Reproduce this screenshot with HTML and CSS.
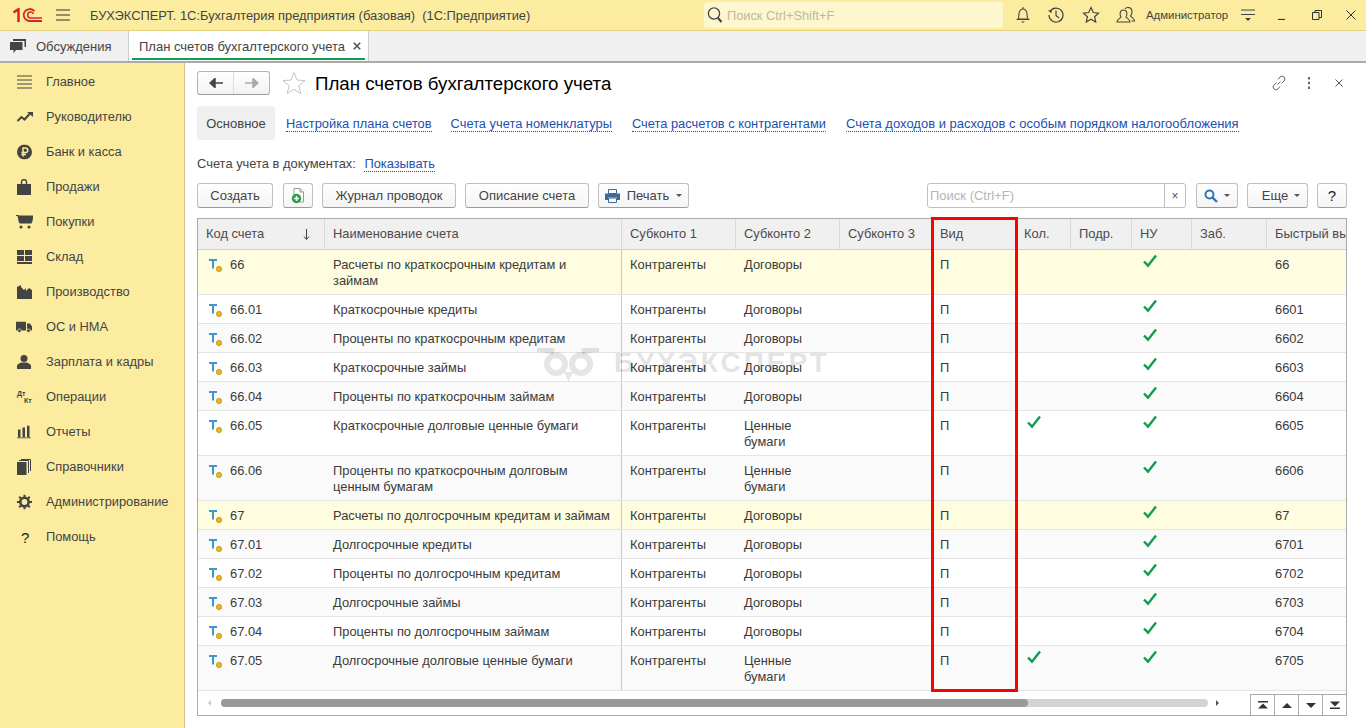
FILE: index.html
```html
<!DOCTYPE html>
<html lang="ru">
<head>
<meta charset="utf-8">
<title>План счетов бухгалтерского учета</title>
<link rel="stylesheet" href="styles.css">
</head>
<body>
<svg class="defs" width="0" height="0" aria-hidden="true">
  <symbol id="acc" viewBox="0 0 16 16">
    <path d="M1 1h8M5 1V9.500" fill="none" stroke="#3f96cc" stroke-width="2"/>
    <circle cx="11" cy="10" r="2.700" fill="#e8b818" stroke="#b08a10" stroke-width=".6"/>
  </symbol>
  <symbol id="chk" viewBox="0 0 14 14">
    <path d="M1 7.500l4 4.200L13 1.500" fill="none" stroke="#0f9d50" stroke-width="2.400"/>
  </symbol>
</svg>
<div class="app">
  <header class="topbar">
    <svg class="logo" width="29" height="14" viewBox="0 0 29 14">
      <path d="M.5 4.500L5.500 1.200V14" fill="none" stroke="#d8252a" stroke-width="2.500"/>
      <path d="M21.500 3.300A6 6 0 1 0 17 13H29" fill="none" stroke="#d8252a" stroke-width="1.800"/>
      <path d="M20.500 6A3 3 0 1 0 17.500 10H29" fill="none" stroke="#d8252a" stroke-width="1.600"/>
    </svg>
    <svg class="burger" width="14" height="12" viewBox="0 0 14 12"><path d="M0 1h14M0 6h14M0 11h14" stroke="#333" stroke-width="1.200"/></svg>
    <div class="apptitle">БУХЭКСПЕРТ. 1С:Бухгалтерия предприятия (базовая)&nbsp; (1С:Предприятие)</div>
    <div class="globalsearch">
      <svg width="16" height="18" viewBox="0 0 16 18"><circle cx="7" cy="7.500" r="5.600" fill="none" stroke="#444" stroke-width="1.300"/><path d="M11 12l3.500 4" stroke="#444" stroke-width="2"/></svg>
      <span>Поиск Ctrl+Shift+F</span>
    </div>
    <div class="topicons">
      <svg width="16" height="18" viewBox="0 0 16 18"><path d="M3 13c1-1.500 1-3 1-5.500C4 5 6 3 8 3s4 2 4 4.500c0 2.500 0 4 1 5.500z M1.500 13.500h13" fill="none" stroke="#444" stroke-width="1.100"/><path d="M6 15.500h4l-2 1.500z" fill="#444"/><path d="M8 1v2" stroke="#444"/></svg>
      <svg width="18" height="18" viewBox="0 0 18 18"><path d="M3 5.500A7 7 0 1 1 2 9" fill="none" stroke="#444" stroke-width="1.200"/><path d="M1 4.500l3.500-.5v3.500z" fill="#444"/><path d="M9 4.500V9.500l3 2.500" fill="none" stroke="#444" stroke-width="1.200"/></svg>
      <svg width="18" height="18" viewBox="0 0 18 18"><path d="M9 1.500l2.300 5 5.200.6-3.900 3.600 1.100 5.300L9 13.300 4.300 16l1.100-5.300L1.500 7.100l5.200-.6z" fill="none" stroke="#444" stroke-width="1.200"/></svg>
      <svg width="20" height="18" viewBox="0 0 20 18"><path d="M1 16c0-3 3-3.500 4-5-1.500-2-1.500-7 2.500-7S11.500 9 10 11c1 1.500 4 2 4 5z" fill="none" stroke="#444" stroke-width="1.100"/><path d="M9 3c1-2 7-2.500 7 2.500 0 2-.5 3.500-1.500 4.500 1 1.500 4 2 4 5h-3" fill="none" stroke="#444" stroke-width="1.100"/></svg>
    </div>
    <div class="username">Администратор</div>
    <svg class="wbtn-menu" width="14" height="12" viewBox="0 0 14 12"><path d="M0 1h14M0 5.500h14" stroke="#444" stroke-width="1.100"/><path d="M4 9h6l-3 3z" fill="#444"/></svg>
    <div class="wincontrols">
      <svg width="10" height="10" viewBox="0 0 10 10"><path d="M1 9.500h7" stroke="#333" stroke-width="1.200"/></svg>
      <svg width="10" height="10" viewBox="0 0 10 10"><path d="M.5 2.500h6.500v7H.5z M3 2.500V.5h6.500v7H7" fill="none" stroke="#333"/></svg>
      <svg width="10" height="10" viewBox="0 0 10 10"><path d="M.5.500l9 9M9.500.500l-9 9" stroke="#333"/></svg>
    </div>
  </header>

  <nav class="tabbar">
    <div class="tab tab-plain">
      <svg width="17" height="15" viewBox="0 0 17 15"><path d="M4 0h13v8h-1.500V2H4z" fill="#444"/><path d="M1 3h12.500v8H7l-2.500 3v-3H1z" fill="#444"/></svg>
      <span>Обсуждения</span>
    </div>
    <div class="tab tab-active">
      <span>План счетов бухгалтерского учета</span>
      <svg class="tabclose" width="8" height="8" viewBox="0 0 8 8"><path d="M.8.800l6.400 6.400M7.200.800L.8 7.200" stroke="#555" stroke-width="1.600"/></svg>
    </div>
  </nav>

  <div class="workspace">
    <aside class="sidebar">
      <div class="navitem"><svg class="navicon" width="15" height="15" viewBox="0 0 15 15"><path d="M0 1.500h15M0 5.500h15M0 9.500h15M0 13.500h15" stroke="#444"/></svg>Главное</div>
      <div class="navitem"><svg class="navicon" width="16" height="12" viewBox="0 0 16 12"><path d="M.5 10l4-4 3 2.500 5-5.500" fill="none" stroke="#444" stroke-width="2"/><path d="M10 1h6v5z" fill="#444"/></svg>Руководителю</div>
      <div class="navitem"><svg class="navicon" width="15" height="15" viewBox="0 0 15 15"><circle cx="7.500" cy="7.500" r="7.500" fill="#444"/><path d="M6 12V3.500h2.500a2.300 2.300 0 0 1 0 4.600H4.500M4.500 10H9" fill="none" stroke="#fbec9f" stroke-width="1.500"/></svg>Банк и касса</div>
      <div class="navitem"><svg class="navicon" width="14" height="16" viewBox="0 0 14 16"><path d="M0 5h14v11H0z" fill="#444"/><path d="M4.500 7V3a2.500 2.500 0 0 1 5 0v4" fill="none" stroke="#444" stroke-width="1.400"/></svg>Продажи</div>
      <div class="navitem"><svg class="navicon navicon-wide" width="17" height="14" viewBox="0 0 17 14"><path d="M0 .5h3M2 1h15l-1.500 7H3.500z" fill="#444" stroke="#444"/><circle cx="5" cy="12" r="1.500" fill="#444"/><circle cx="13" cy="12" r="1.500" fill="#444"/></svg>Покупки</div>
      <div class="navitem"><svg class="navicon" width="15" height="14" viewBox="0 0 15 14"><path d="M0 0h7v5H0zM8 0h7v5H8zM0 6h7v5H0zM8 6h7v5H8zM0 12h15v2H0z" fill="#444"/></svg>Склад</div>
      <div class="navitem"><svg class="navicon" width="15" height="14" viewBox="0 0 15 14"><path d="M0 14V2l4-2v2l3 3 2-2v3l3-3 3 2v9z" fill="#444"/></svg>Производство</div>
      <div class="navitem"><svg class="navicon navicon-wide" width="16" height="11" viewBox="0 0 16 11"><path d="M0 0h10v9H0zM11 2h3l2 3v4h-5z" fill="#444"/><circle cx="3.500" cy="9.200" r="1.800" fill="#444" stroke="#fbec9f" stroke-width=".7"/><circle cx="12.500" cy="9.200" r="1.800" fill="#444" stroke="#fbec9f" stroke-width=".7"/></svg>ОС и НМА</div>
      <div class="navitem"><svg class="navicon" width="14" height="14" viewBox="0 0 14 14"><circle cx="7" cy="3.500" r="3.500" fill="#444"/><path d="M0 14v-3c0-2 3-3 4.500-3.500h5C11 8 14 9 14 11v3z" fill="#444"/></svg>Зарплата и кадры</div>
      <div class="navitem"><span class="navicon dtkt"><span>Дт</span><span class="kt">Кт</span></span>Операции</div>
      <div class="navitem"><svg class="navicon" width="14" height="13" viewBox="0 0 14 13"><path d="M1 4h2.500v8H1zM5.500 2H8v10H5.500zM10 0h2.500v12H10z" fill="#444"/><path d="M0 12.500h14" stroke="#444"/></svg>Отчеты</div>
      <div class="navitem"><svg class="navicon" width="14" height="16" viewBox="0 0 14 16"><path d="M0 3h9.500v13H0z" fill="#444"/><path d="M2 1.500h9.500V14M4 .5h9.500V12" fill="none" stroke="#444"/></svg>Справочники</div>
      <div class="navitem"><svg class="navicon" width="15" height="15" viewBox="0 0 15 15"><circle cx="7.500" cy="7.500" r="4.200" fill="none" stroke="#444" stroke-width="2.600"/><path d="M7.500 0v15M0 7.500h15M2.200 2.200l10.600 10.600M12.800 2.200L2.200 12.800" stroke="#444" stroke-width="2" stroke-dasharray="2.600 9.800"/></svg>Администрирование</div>
      <div class="navitem"><span class="navicon helpmark">?</span>Помощь</div>
    </aside>

    <main class="content">
      <div class="formhead">
        <div class="navgroup">
          <span class="navbtn"><svg width="14" height="10" viewBox="0 0 14 10"><path d="M14 5H5M6 .5L1 5l5 4.500z" fill="#444" stroke="#444" stroke-width="1.500"/></svg></span>
          <span class="navbtn"><svg width="14" height="10" viewBox="0 0 14 10"><path d="M0 5h9M8 .5L13 5 8 9.500z" fill="#aaa" stroke="#aaa" stroke-width="1.500"/></svg></span>
        </div>
        <svg class="favstar" width="24" height="24" viewBox="0 0 24 24"><path d="M12 1.500l3 7.500 8 .6-6.200 5.100 2 7.800L12 18.300l-6.800 4.200 2-7.800L1 9.600 9 9z" fill="none" stroke="#c4c4c4"/></svg>
        <h1 class="formtitle">План счетов бухгалтерского учета</h1>
        <div class="formactions">
          <svg width="16" height="16" viewBox="0 0 16 16"><path d="M6.500 9.500l3-3M7 4.500l2-2.500a2.800 2.800 0 0 1 4 4l-2.500 2.500M9 11.500l-2 2.500a2.800 2.800 0 0 1-4-4l2.500-2.500" fill="none" stroke="#666"/></svg>
          <svg class="dots" width="4" height="12" viewBox="0 0 4 12"><path d="M2 0v2.500M2 4.800v2.500M2 9.500V12" stroke="#666" stroke-width="2"/></svg>
          <svg width="8" height="8" viewBox="0 0 8 8"><path d="M.5.500l7 7M7.500.500l-7 7" stroke="#555"/></svg>
        </div>
      </div>

      <div class="sections">
        <span class="section-current">Основное</span>
        <a class="lnk sec1" href="#">Настройка плана счетов</a>
        <a class="lnk" href="#">Счета учета номенклатуры</a>
        <a class="lnk" href="#">Счета расчетов с контрагентами</a>
        <a class="lnk lnk-long" href="#">Счета доходов и расходов с особым порядком налогообложения</a>
      </div>

      <div class="docline">Счета учета в документах: <a class="lnk docshow" href="#">Показывать</a></div>

      <div class="toolbar">
        <button class="btn b-create">Создать</button>
        <button class="btn b-icon"><svg width="14" height="16" viewBox="0 0 14 16"><path d="M3 .5h6l3.500 3.500v10H3z" fill="#fff" stroke="#999"/><path d="M9 .5V4h3.500" fill="#ddd" stroke="#999"/><circle cx="5.500" cy="10.500" r="4.700" fill="#25a048"/><path d="M5.500 8v5M3 10.500h5" stroke="#fff" stroke-width="1.500"/></svg></button>
        <button class="btn b-journal">Журнал проводок</button>
        <button class="btn b-descr">Описание счета</button>
        <button class="btn b-print"><svg width="15" height="14" viewBox="0 0 15 14"><path d="M3.500.5h8v4h-8z" fill="#fff" stroke="#3c6a94"/><path d="M0 4.500h15V11h-3V8.500H3V11H0z" fill="#3c6a94"/><path d="M3.500 9h8v4.500h-8z" fill="#fff" stroke="#3c6a94"/></svg><span>Печать</span><i class="caret"></i></button>
        <div class="tbsearch"><span class="tbsearch-ph">Поиск (Ctrl+F)</span><span class="tbsearch-x">×</span></div>
        <button class="btn b-find"><svg width="14" height="14" viewBox="0 0 14 14"><circle cx="5.500" cy="5.500" r="4" fill="none" stroke="#2a76b8" stroke-width="2"/><path d="M8.500 8.500l4.500 4.500" stroke="#2a76b8" stroke-width="2.400"/></svg><i class="caret"></i></button>
        <button class="btn b-more"><span>Еще</span><i class="caret"></i></button>
        <button class="btn b-help">?</button>
      </div>

      <div class="table">
        <div class="row head">
          <div class="c hc c1">Код счета<svg class="sortarrow" width="7" height="11" viewBox="0 0 7 11"><path d="M3.500 0v10M1 7.500l2.500 3 2.500-3" fill="none" stroke="#444"/></svg></div>
          <div class="c hc c2">Наименование счета</div>
          <div class="c hc">Субконто 1</div><div class="c hc">Субконто 2</div><div class="c hc">Субконто 3</div>
          <div class="c hc">Вид</div><div class="c hc">Кол.</div><div class="c hc">Подр.</div><div class="c hc">НУ</div><div class="c hc">Заб.</div><div class="c hc clip">Быстрый выбор</div>
        </div>

        <div class="row group"><div class="c c1"><svg class="acc"><use href="#acc"/></svg>66</div><div class="c c2">Расчеты по краткосрочным кредитам и<br>займам</div><div class="c">Контрагенты</div><div class="c">Договоры</div><div class="c"></div><div class="c">П</div><div class="c"></div><div class="c"></div><div class="c"><svg class="chk"><use href="#chk"/></svg></div><div class="c"></div><div class="c">66</div></div>
        <div class="row"><div class="c c1"><svg class="acc"><use href="#acc"/></svg>66.01</div><div class="c c2">Краткосрочные кредиты</div><div class="c">Контрагенты</div><div class="c">Договоры</div><div class="c"></div><div class="c">П</div><div class="c"></div><div class="c"></div><div class="c"><svg class="chk"><use href="#chk"/></svg></div><div class="c"></div><div class="c">6601</div></div>
        <div class="row alt"><div class="c c1"><svg class="acc"><use href="#acc"/></svg>66.02</div><div class="c c2">Проценты по краткосрочным кредитам</div><div class="c">Контрагенты</div><div class="c">Договоры</div><div class="c"></div><div class="c">П</div><div class="c"></div><div class="c"></div><div class="c"><svg class="chk"><use href="#chk"/></svg></div><div class="c"></div><div class="c">6602</div></div>
        <div class="row"><div class="c c1"><svg class="acc"><use href="#acc"/></svg>66.03</div><div class="c c2">Краткосрочные займы</div><div class="c">Контрагенты</div><div class="c">Договоры</div><div class="c"></div><div class="c">П</div><div class="c"></div><div class="c"></div><div class="c"><svg class="chk"><use href="#chk"/></svg></div><div class="c"></div><div class="c">6603</div></div>
        <div class="row alt"><div class="c c1"><svg class="acc"><use href="#acc"/></svg>66.04</div><div class="c c2">Проценты по краткосрочным займам</div><div class="c">Контрагенты</div><div class="c">Договоры</div><div class="c"></div><div class="c">П</div><div class="c"></div><div class="c"></div><div class="c"><svg class="chk"><use href="#chk"/></svg></div><div class="c"></div><div class="c">6604</div></div>
        <div class="row"><div class="c c1"><svg class="acc"><use href="#acc"/></svg>66.05</div><div class="c c2">Краткосрочные долговые ценные бумаги</div><div class="c">Контрагенты</div><div class="c">Ценные<br>бумаги</div><div class="c"></div><div class="c">П</div><div class="c"><svg class="chk"><use href="#chk"/></svg></div><div class="c"></div><div class="c"><svg class="chk"><use href="#chk"/></svg></div><div class="c"></div><div class="c">6605</div></div>
        <div class="row alt"><div class="c c1"><svg class="acc"><use href="#acc"/></svg>66.06</div><div class="c c2">Проценты по краткосрочным долговым<br>ценным бумагам</div><div class="c">Контрагенты</div><div class="c">Ценные<br>бумаги</div><div class="c"></div><div class="c">П</div><div class="c"></div><div class="c"></div><div class="c"><svg class="chk"><use href="#chk"/></svg></div><div class="c"></div><div class="c">6606</div></div>
        <div class="row group"><div class="c c1"><svg class="acc"><use href="#acc"/></svg>67</div><div class="c c2">Расчеты по долгосрочным кредитам и займам</div><div class="c">Контрагенты</div><div class="c">Договоры</div><div class="c"></div><div class="c">П</div><div class="c"></div><div class="c"></div><div class="c"><svg class="chk"><use href="#chk"/></svg></div><div class="c"></div><div class="c">67</div></div>
        <div class="row alt"><div class="c c1"><svg class="acc"><use href="#acc"/></svg>67.01</div><div class="c c2">Долгосрочные кредиты</div><div class="c">Контрагенты</div><div class="c">Договоры</div><div class="c"></div><div class="c">П</div><div class="c"></div><div class="c"></div><div class="c"><svg class="chk"><use href="#chk"/></svg></div><div class="c"></div><div class="c">6701</div></div>
        <div class="row"><div class="c c1"><svg class="acc"><use href="#acc"/></svg>67.02</div><div class="c c2">Проценты по долгосрочным кредитам</div><div class="c">Контрагенты</div><div class="c">Договоры</div><div class="c"></div><div class="c">П</div><div class="c"></div><div class="c"></div><div class="c"><svg class="chk"><use href="#chk"/></svg></div><div class="c"></div><div class="c">6702</div></div>
        <div class="row alt"><div class="c c1"><svg class="acc"><use href="#acc"/></svg>67.03</div><div class="c c2">Долгосрочные займы</div><div class="c">Контрагенты</div><div class="c">Договоры</div><div class="c"></div><div class="c">П</div><div class="c"></div><div class="c"></div><div class="c"><svg class="chk"><use href="#chk"/></svg></div><div class="c"></div><div class="c">6703</div></div>
        <div class="row"><div class="c c1"><svg class="acc"><use href="#acc"/></svg>67.04</div><div class="c c2">Проценты по долгосрочным займам</div><div class="c">Контрагенты</div><div class="c">Договоры</div><div class="c"></div><div class="c">П</div><div class="c"></div><div class="c"></div><div class="c"><svg class="chk"><use href="#chk"/></svg></div><div class="c"></div><div class="c">6704</div></div>
        <div class="row alt"><div class="c c1"><svg class="acc"><use href="#acc"/></svg>67.05</div><div class="c c2">Долгосрочные долговые ценные бумаги</div><div class="c">Контрагенты</div><div class="c">Ценные<br>бумаги</div><div class="c"></div><div class="c">П</div><div class="c"><svg class="chk"><use href="#chk"/></svg></div><div class="c"></div><div class="c"><svg class="chk"><use href="#chk"/></svg></div><div class="c"></div><div class="c">6705</div></div>

        <div class="tablefoot">
          <i class="arrow-l"></i>
          <div class="track"><div class="thumb"></div></div>
          <i class="arrow-r"></i>
          <div class="pager">
            <span class="pg"><svg width="10" height="8" viewBox="0 0 10 8"><path d="M0 0h10v1.500H0zM5 2.500l5 5H0z" fill="#333"/></svg></span>
            <span class="pg"><svg width="10" height="5" viewBox="0 0 10 5"><path d="M5 0l5 5H0z" fill="#333"/></svg></span>
            <span class="pg"><svg width="10" height="5" viewBox="0 0 10 5"><path d="M5 5l5-5H0z" fill="#333"/></svg></span>
            <span class="pg"><svg width="10" height="8" viewBox="0 0 10 8"><path d="M0 6.500h10V8H0zM5 5.500L0 .5h10z" fill="#333"/></svg></span>
          </div>
        </div>

        <div class="watermark">
          <svg width="64" height="34" viewBox="0 0 64 34"><g fill="none" stroke="#000" stroke-opacity=".1" stroke-width="6"><circle cx="20" cy="16" r="9"/><circle cx="45" cy="16" r="9"/><path d="M1 1c6 0 12 1 17 3M63 1c-6 0-12 1-17 3"/></g><path d="M28 24h9l-4.500 10z" fill="#000" fill-opacity=".1"/></svg>
          <span>БУХЭКСПЕРТ</span>
        </div>
        <div class="highlight"></div>
      </div>
    </main>
  </div>
</div>
</body>
</html>
```
FILE: styles.css
```css
* { box-sizing: border-box; }
html, body { margin: 0; padding: 0; height: 100%; overflow: hidden; }
body { font-family: "Liberation Sans", Arial, sans-serif; font-size: 13px; color: #3a3a3a; background: #fff; }
.defs { position: absolute; }
.app { width: 1366px; height: 728px; display: flex; flex-direction: column; overflow: hidden; }

.topbar { height: 31px; flex: none; display: flex; align-items: center; background: #fbec9f; border-bottom: 1px solid #e3d27f; padding-left: 13px; }
.logo { flex: none; }
.burger { margin-left: 14px; flex: none; }
.apptitle { margin-left: 20px; width: 614px; font-size: 12.9px; white-space: nowrap; color: #444; }
.globalsearch { width: 299px; height: 26px; flex: none; background: #fdf6cf; border-radius: 3px; display: flex; align-items: center; color: #bdb9a0; font-size: 12.8px; }
.globalsearch svg { margin: 0 4px 0 3px; }
.topicons { margin-left: 12px; width: 121px; display: flex; justify-content: space-between; align-items: center; flex: none; }
.topicons svg { flex: none; }
.username { margin-left: 10px; width: 95px; flex: none; font-size: 11.4px; color: #444; white-space: nowrap; }
.wbtn-menu { flex: none; }
.wincontrols { margin-left: 22px; width: 79px; flex: none; display: flex; justify-content: space-between; }

.tabbar { height: 32px; flex: none; display: flex; background: #f0f0f0; border-bottom: 2px solid #aaa; }
.tab { display: flex; align-items: center; font-size: 13px; color: #444; }
.tab-plain { width: 129px; padding-left: 9px; gap: 10px; border-right: 1px solid #ccc; }
.tab-active { width: 240px; padding-left: 10px; gap: 8px; background: #fff; border-right: 1px solid #ccc; position: relative; }
.tab-active::after { content: ""; position: absolute; left: 3px; right: 3px; bottom: 1px; height: 2px; background: #0f9d50; }

.workspace { flex: 1; display: flex; min-height: 0; }
.sidebar { width: 185px; flex: none; background: #fbec9f; border-right: 1px solid #cfc27e; padding-top: 1px; }
.navitem { height: 35px; display: flex; align-items: center; padding-left: 46px; position: relative; color: #444; font-size: 12.85px; }
.navicon { position: absolute; left: 17px; top: 50%; transform: translateY(-50%); }
.navicon-wide { left: 16px; }
.dtkt { width: 16px; font-size: 7px; font-weight: bold; line-height: 7px; display: flex; flex-direction: column; color: #444; }
.kt { margin-left: 7px; }
.helpmark { left: 21px; font-size: 15px; color: #222; }

.content { flex: 1; min-width: 0; padding: 8px 19px 0 12px; display: flex; flex-direction: column; }
.formhead { height: 24px; flex: none; display: flex; align-items: center; }
.navgroup { display: flex; width: 73px; height: 24px; border: 1px solid #b5b5b5; border-bottom-color: #999; border-radius: 3px; background: linear-gradient(#fff, #f2f2f2); }
.navbtn { flex: 1; display: flex; align-items: center; justify-content: center; }
.navbtn + .navbtn { border-left: 1px solid #ddd; }
.favstar { margin-left: 12px; }
.formtitle { margin: 2px 0 0 9px; font-size: 18.7px; font-weight: normal; color: #000; white-space: nowrap; }
.formactions { margin-left: auto; width: 72px; display: flex; align-items: center; justify-content: space-between; margin-right: 4px; }
.dots { margin-right: 4px; }

.sections { margin-top: 11px; height: 34px; flex: none; display: flex; align-items: center; }
.section-current { width: 78px; height: 34px; flex: none; background: #f0f0f0; border-radius: 3px; display: flex; align-items: center; justify-content: center; padding-top: 1px; color: #444; }
.lnk { color: #1c4fb0; text-decoration: none; border-bottom: 1px dotted #1c4fb0; line-height: 14px; margin-left: 20px; margin-top: 2px; font-size: 12.85px; }
.sec1 { margin-left: 11px; }
.sec1 + .lnk { margin-left: 19px; }
.lnk-long { font-size: 13px; }

.docline { margin-top: 16px; height: 16px; line-height: 16px; flex: none; font-size: 12.9px; color: #444; }
.docshow { margin-left: 5px; display: inline-block; margin-top: 0; }

.toolbar { margin-top: 11px; height: 25px; flex: none; display: flex; gap: 9px; align-items: stretch; }
.btn { font: inherit; color: #444; height: 25px; padding: 0; border: 1px solid #c0c0c0; border-bottom-color: #9a9a9a; border-radius: 3px; background: linear-gradient(#fff, #f4f4f4); display: flex; align-items: center; justify-content: center; flex: none; }
.b-create { width: 76px; margin-right: 1px; }
.b-icon { width: 30px; }
.b-journal { width: 134px; }
.b-descr { width: 124px; }
.b-print { width: 91px; gap: 7px; }
.b-find { width: 42px; gap: 6px; }
.b-more { width: 61px; gap: 6px; padding-left: 7px; }
.b-help { width: 30px; font-size: 15px; color: #222; }
.caret { width: 0; height: 0; border: 3px solid transparent; border-top-color: #555; border-bottom: 0; display: block; }
.tbsearch { margin-left: auto; width: 259px; height: 25px; border: 1px solid #c0c0c0; border-radius: 3px; display: flex; align-items: center; margin-right: 1px; }
.tbsearch-ph { flex: 1; padding-left: 2px; color: #b5b5b5; }
.tbsearch-x { width: 21px; height: 23px; border-left: 1px solid #c0c0c0; display: flex; align-items: center; justify-content: center; color: #555; font-size: 12px; }

.table { margin-top: 10px; width: 1150px; height: 498px; flex: none; border: 1px solid #aaa; position: relative; }
.row { display: grid; grid-template-columns: 127px 297px 114px 104px 92px 84px 55px 61px 60px 75px 79px; border-bottom: 1px solid #e4e4e4; background: #fff; position: relative; }
.row.alt { background: #fafafa; }
.row.group { background: #fefde0; }
.c { padding: 7px 8px 5px; line-height: 16px; min-width: 0; font-size: 12.9px; color: #3a3a3a; }
.c:nth-child(2) { border-right: 1px solid #c8c8c8; }
.c1 { position: relative; padding-left: 32px; }
.acc { position: absolute; left: 10px; top: 9px; width: 16px; height: 16px; }
.chk { display: block; width: 14px; height: 14px; margin: -3px 0 0 3px; }
.head { background: #f0f0f0; border-bottom: 1px solid #d0d0d0; height: 31px; }
.hc { height: 30px; padding-top: 7px; color: #4b4b4b; border-right: 1px solid #d8d8d8; white-space: nowrap; overflow: hidden; }
.hc.c1 { padding-left: 8px; display: flex; justify-content: space-between; padding-right: 14px; }
.sortarrow { margin-top: 3px; }
.clip { border-right: 0; }
.head .c:nth-child(2) { border-right: 1px solid #d8d8d8; }

.tablefoot { height: 24px; display: flex; align-items: center; position: relative; padding-left: 9px; }
.arrow-l { width: 0; height: 0; border: 3px solid transparent; border-right-color: #ccc; border-left: 0; display: block; margin-left: 1px; }
.arrow-r { width: 0; height: 0; border: 3px solid transparent; border-left-color: #555; border-right: 0; display: block; margin-left: 8px; }
.track { margin-left: 10px; width: 987px; height: 8px; border-radius: 4px; background: #d4d4d4; }
.thumb { width: 807px; height: 8px; border-radius: 4px; background: #999; }
.pager { position: absolute; right: 0; bottom: 0; display: flex; height: 21px; border-top: 1px solid #aaa; }
.pg { width: 24px; border-left: 1px solid #aaa; display: flex; align-items: center; justify-content: center; }

.watermark { position: absolute; left: 338px; top: 129px; display: flex; align-items: flex-start; gap: 14px; pointer-events: none; }
.watermark span { font-size: 28px; line-height: 30px; font-weight: bold; letter-spacing: 3px; color: #000; opacity: .1; white-space: nowrap; }
.highlight { position: absolute; left: 733px; top: -2px; width: 87px; height: 475px; border: 3px solid #f00; pointer-events: none; }
```
